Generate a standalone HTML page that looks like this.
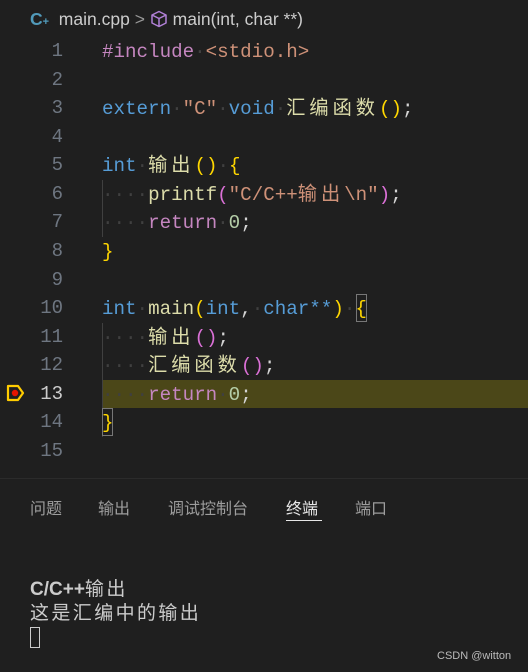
<!DOCTYPE html>
<html><head><meta charset="utf-8"><style>
body{margin:0;width:528px;height:672px;background:#1f1f1f;overflow:hidden;position:relative;font-family:"Liberation Mono","Noto Sans CJK SC",monospace;}
.bc{position:absolute;top:9px;left:30px;font-family:"Liberation Sans","Noto Sans CJK SC",sans-serif;font-size:17.5px;color:#cccccc;white-space:nowrap}
.ln{position:absolute;left:0;width:63px;text-align:right;font-size:19px;color:#6e7681;line-height:28.57px}
.code{position:absolute;left:102px;font-size:19.2px;line-height:28.57px;white-space:pre;color:#d4d4d4}
.z{letter-spacing:4px}
.d{color:#404040}
.k{color:#569cd6}.p{color:#c586c0}.s{color:#ce9178}.f{color:#dcdcaa}.y{color:#ffd700}.m{color:#da70d6}.n{color:#b5cea8}
.guide{position:absolute;left:102px;width:1px;background:#404040}
.tab{position:absolute;top:495px;font-family:"Liberation Sans","Noto Sans CJK SC",sans-serif;font-size:16px;color:#9d9d9d}
.term{position:absolute;left:30px;font-family:"Liberation Sans","Noto Sans CJK SC",sans-serif;font-size:19px;color:#cccccc;line-height:23.5px}
.term .c{letter-spacing:2.4px}
</style></head><body>
<div class="bc"><span style="color:#519aba;font-weight:bold">C<span style="font-size:11px">+</span></span>&nbsp; main.cpp <span style="color:#999">&gt;</span> <svg width="18" height="18" viewBox="0 0 18 18" style="vertical-align:-3px"><path d="M9 1.5 L16 5 V13 L9 16.5 L2 13 V5 Z M2 5 L9 8.5 L16 5 M9 8.5 V16.5" fill="none" stroke="#b180d7" stroke-width="1.5" stroke-linejoin="round"/></svg> main(int, char **)</div>
<div style="position:absolute;left:102px;top:380px;width:426px;height:28px;background:#4b4718"></div>
<div class="guide" style="top:180px;height:57px"></div>
<div class="guide" style="top:323px;height:114px"></div>
<div style="position:absolute;left:102px;top:408px;width:11px;height:28px;border:1px solid #777;box-sizing:border-box"></div>
<div style="position:absolute;left:356px;top:294px;width:11px;height:28px;border:1px solid #777;box-sizing:border-box"></div>
<svg style="position:absolute;left:6px;top:384px" width="20" height="18" viewBox="0 0 20 18"><path d="M2 2 H12 L17 9 L12 16 H2 Z" fill="none" stroke="#ffcc00" stroke-width="2.2" stroke-linejoin="round"/><circle cx="9" cy="9" r="3.2" fill="#e51400"/></svg>
<div class="ln" style="top:37px">1<br>2<br>3<br>4<br>5<br>6<br>7<br>8<br>9<br>10<br>11<br>12<br><span style="color:#ccc">13</span><br>14<br>15</div>
<div class="code" style="top:38px"><span class="p">#include</span><span class="d">·</span><span class="s">&lt;stdio.h&gt;</span>

<span class="k">extern</span><span class="d">·</span><span class="s">"C"</span><span class="d">·</span><span class="k">void</span><span class="d">·</span><span class="f z">汇编函数</span><span class="y">()</span>;

<span class="k">int</span><span class="d">·</span><span class="f z">输出</span><span class="y">()</span><span class="d">·</span><span class="y">{</span>
<span class="d">····</span><span class="f">printf</span><span class="m">(</span><span class="s">"C/C++<span class="z">输出</span>\n"</span><span class="m">)</span>;
<span class="d">····</span><span class="p">return</span><span class="d">·</span><span class="n">0</span>;
<span class="y">}</span>

<span class="k">int</span><span class="d">·</span><span class="f">main</span><span class="y">(</span><span class="k">int</span>,<span class="d">·</span><span class="k">char</span><span class="k">**</span><span class="y">)</span><span class="d">·</span><span class="y">{</span>
<span class="d">····</span><span class="f z">输出</span><span class="m">()</span>;
<span class="d">····</span><span class="f z">汇编函数</span><span class="m">()</span>;
<span class="d">····</span><span class="p">return</span><span class="d">·</span><span class="n">0</span>;
<span class="y">}</span>
</div>
<div style="position:absolute;left:0;top:478px;width:528px;height:1px;background:#2b2b2b"></div>
<div class="tab" style="left:30px">问题</div>
<div class="tab" style="left:98px">输出</div>
<div class="tab" style="left:168px">调试控制台</div>
<div class="tab" style="left:286px;color:#e7e7e7">终端</div>
<div style="position:absolute;left:286px;top:520px;width:36px;height:1px;background:#e7e7e7"></div>
<div class="tab" style="left:355px">端口</div>
<div class="term" style="top:578px"><b>C/C++</b><span class="c">输出</span><br><span class="c">这是汇编中的输出</span></div>
<div style="position:absolute;left:30px;top:627px;width:10px;height:21px;border:1px solid #ccc;box-sizing:border-box"></div>
<div style="position:absolute;left:437px;top:650px;font-family:'Liberation Sans',sans-serif;font-size:11px;color:#bbb">CSDN @witton</div>
</body></html>
